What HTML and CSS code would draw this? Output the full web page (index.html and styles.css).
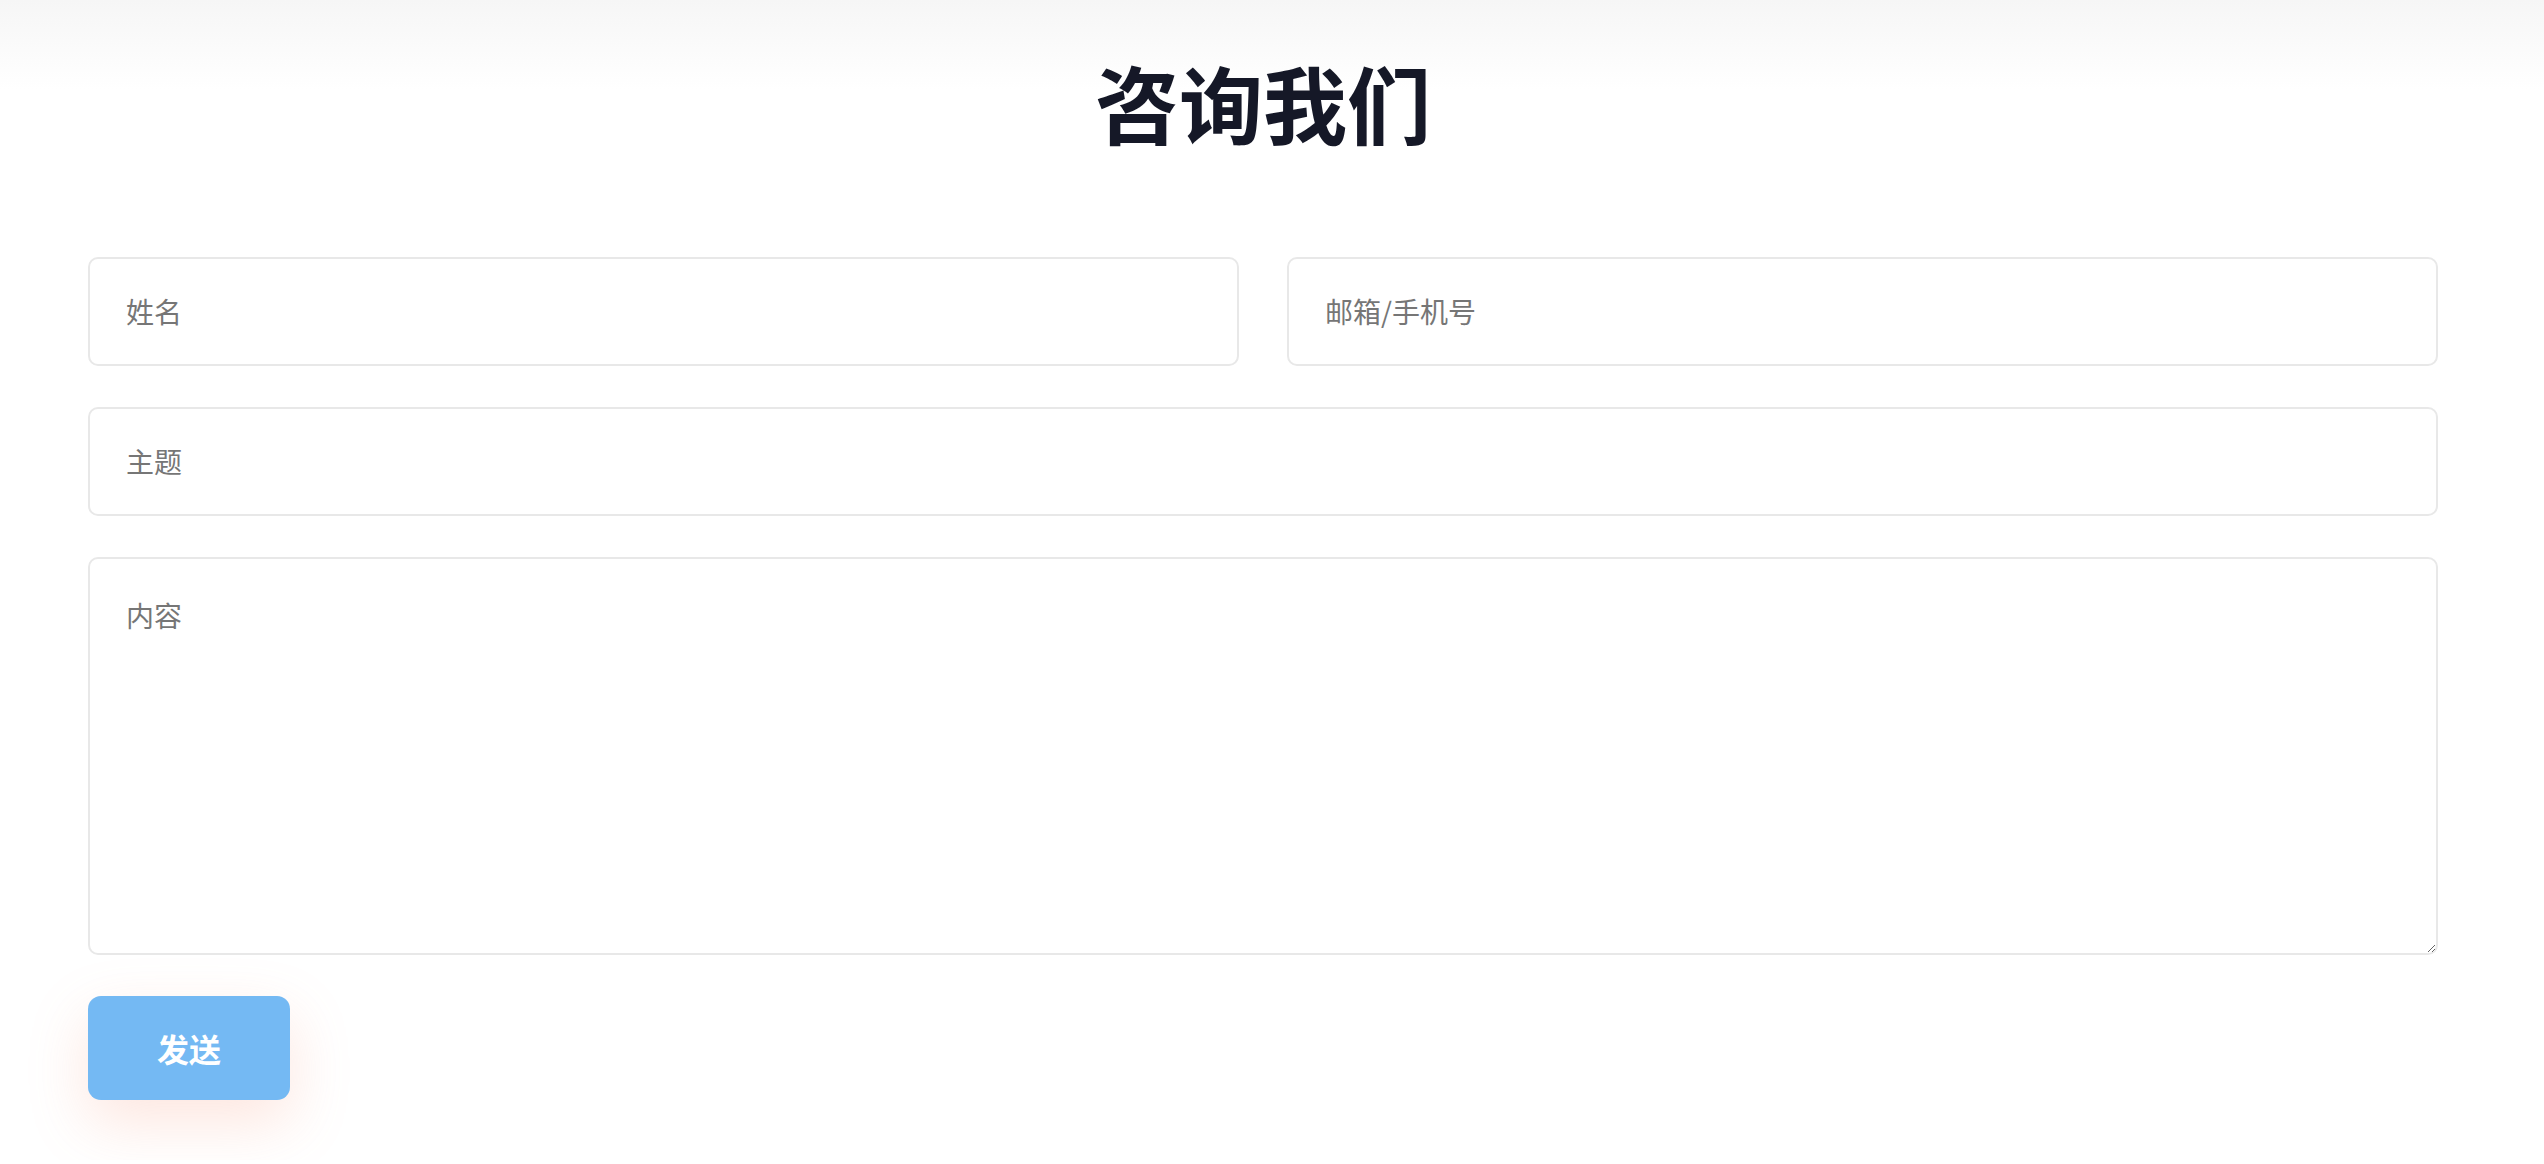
FILE: index.html
```html
<!DOCTYPE html>
<html lang="zh-CN">
<head>
<meta charset="UTF-8">
<meta name="viewport" content="width=device-width, initial-scale=1.0">
<title>咨询我们</title>
<link rel="stylesheet" href="styles.css">
</head>
<body>

<section class="contact">
    <h1>咨询我们</h1>

    <form class="contact-form">
        <div class="row">
            <input type="text" placeholder="姓名">
            <input type="text" placeholder="邮箱/手机号">
        </div>
        <input type="text" placeholder="主题">
        <textarea placeholder="内容"></textarea>
        <div>
            <button type="submit">发送</button>
        </div>
    </form>
</section>

</body>
</html>
```

FILE: styles.css
```css
body {
    font-family: "Noto Sans CJK SC", "Noto Sans", sans-serif;
    margin: 0;
    padding: 0;
    background: linear-gradient(#f6f6f6, #ffffff 90px) no-repeat;
    background-color: #fff;
}

.contact {
    padding: 52px 106px 60px 88px;
}

.contact h1 {
    margin: 0 0 104px;
    text-align: center;
    font-size: 84px;
    line-height: 1.2;
    font-weight: 700;
    color: #151827;
}

.contact-form {
    display: flex;
    flex-direction: column;
    gap: 41px;
}

.row {
    display: grid;
    grid-template-columns: 1fr 1fr;
    gap: 48px;
}

input,
textarea {
    box-sizing: border-box;
    width: 100%;
    font-family: inherit;
    font-size: 28px;
    color: #333;
    border: 2px solid #e8e8e8;
    border-radius: 10px;
    background: #fff;
    outline: none;
}

input {
    height: 109px;
    padding: 0 36px;
}

textarea {
    height: 398px;
    padding: 35px 36px;
    line-height: 1.5;
}

input::placeholder,
textarea::placeholder {
    color: #767676;
}

button {
    width: 202px;
    height: 104px;
    border: none;
    border-radius: 13px;
    background-color: #74b9f3;
    color: #fff;
    font-family: inherit;
    font-size: 32px;
    font-weight: 700;
    box-shadow: 0 22px 60px rgba(245, 140, 110, 0.22);
    cursor: pointer;
}
```
